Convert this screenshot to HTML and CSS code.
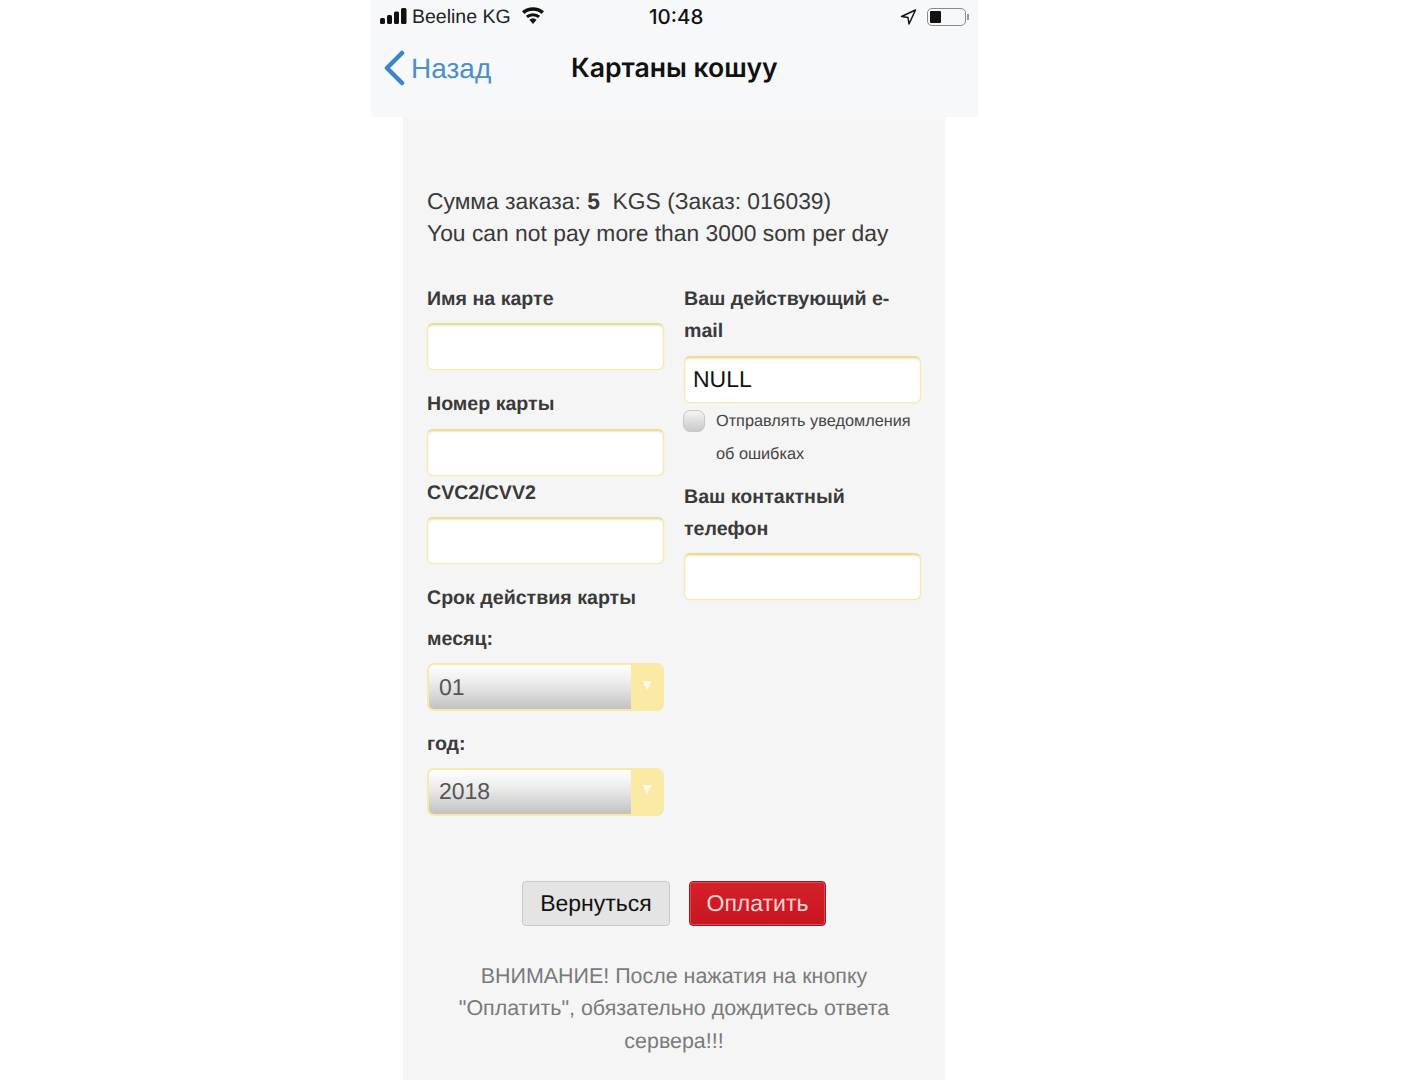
FILE: index.html
```html
<!DOCTYPE html>
<html lang="ru">
<head>
<meta charset="utf-8">
<title>Картаны кошуу</title>
<link rel="stylesheet" href="styles.css">
</head>
<body>
<div class="phone">
  <header class="top">
    <div class="status">
      <div class="status-left">
        <svg class="signal" width="28" height="16" viewBox="0 0 28 16"><rect x="0" y="10" width="5" height="6" rx="1.5"/><rect x="7" y="7" width="5" height="9" rx="1.5"/><rect x="14" y="3.5" width="5" height="12.5" rx="1.5"/><rect x="21" y="0" width="5.5" height="16" rx="1.5"/></svg>
        <span class="carrier">Beeline KG</span>
        <svg class="wifi" width="24" height="17" viewBox="0 0 24 17"><path d="M12 17l-3.6-4.2a5.4 5.4 0 0 1 7.2 0z"/><path d="M6.9 11.1L4.9 8.8a10.8 10.8 0 0 1 14.2 0l-2 2.3a7.8 7.8 0 0 0-10.2 0z"/><path d="M3.4 7L1 4.3a16.6 16.6 0 0 1 22 0L20.600 7a13 13 0 0 0-17.200 0z"/></svg>
      </div>
      <span class="time">10:48</span>
      <div class="status-right">
        <svg class="loc" width="17" height="16" viewBox="0 0 17 16"><path d="M15.500 1L1.500 7.500l6.500 1 1 6.500z" fill="none" stroke="#111" stroke-width="1.500" stroke-linejoin="round"/></svg>
        <div class="battery"><div class="battery-level"></div></div>
        <div class="battery-tip"></div>
      </div>
    </div>
    <nav class="navbar">
      <a class="back">
        <svg width="22" height="36" viewBox="0 0 22 36"><path d="M19 3L4 18l15 15" fill="none" stroke="#3a84c9" stroke-width="4.500" stroke-linecap="round" stroke-linejoin="round"/></svg>
        <span>Назад</span>
      </a>
      <h1 class="title">Картаны кошуу</h1>
    </nav>
  </header>
  <main class="panel">
    <p class="intro">Сумма заказа: <b>5</b>&nbsp; KGS (Заказ: 016039)<br>You can not pay more than 3000 som per day</p>
    <div class="columns">
      <div class="col">
        <label class="lbl">Имя на карте</label>
        <div class="input gap-b"></div>
        <label class="lbl">Номер карты</label>
        <div class="input"></div>
        <label class="lbl">CVC2/CVV2</label>
        <div class="input gap-b"></div>
        <label class="lbl">Срок действия карты</label>
        <label class="lbl">месяц:</label>
        <div class="select select-gap"><span>01</span><i class="arrow"></i></div>
        <label class="lbl lbl-tight">год:</label>
        <div class="select"><span>2018</span><i class="arrow"></i></div>
      </div>
      <div class="col">
        <label class="lbl">Ваш действующий e-mail</label>
        <div class="input value">NULL</div>
        <div class="check-row">
          <span class="check"></span>
          <span class="check-text">Отправлять уведомления об ошибках</span>
        </div>
        <label class="lbl">Ваш контактный телефон</label>
        <div class="input"></div>
      </div>
    </div>
    <div class="actions">
      <button class="btn btn-back">Вернуться</button>
      <button class="btn btn-pay">Оплатить</button>
    </div>
    <p class="warn">ВНИМАНИЕ! После нажатия на кнопку "Оплатить", обязательно дождитесь ответа сервера!!!</p>
  </main>
</div>
</body>
</html>
```
FILE: styles.css
```css
* { box-sizing: border-box; }
html, body { margin: 0; height: 1080px; overflow: hidden; background: #fff; }
body { font-family: "Liberation Sans", Arial, sans-serif; color: #3a3a3a; text-rendering: geometricPrecision; }

.phone { width: 607px; height: 1080px; margin-left: 371px; display: flex; flex-direction: column; }

.top { height: 117px; background: #f7f8fa; flex: none; }
.status { height: 34px; position: relative; display: flex; align-items: center; justify-content: space-between; padding: 0 9px; color: #111; }
.status-left { display: flex; align-items: center; gap: 4px; }
.signal { fill: #111; margin-top: -2px; }
.carrier { font-size: 19.500px; color: #222; }
.wifi { fill: #111; margin-left: 6px; margin-top: -4px; }
.time { position: absolute; left: 278px; top: 5px; font-family: Inter, "Liberation Sans", sans-serif; font-size: 20.500px; font-weight: 500; line-height: 24px; }
.status-right { display: flex; align-items: center; }
.loc { margin-right: 10px; }
.battery { width: 39px; height: 18px; border: 1.5px solid #8a8a8a; border-radius: 5px; padding: 2px; }
.battery-level { width: 11px; height: 100%; background: #111; border-radius: 1px; }
.battery-tip { width: 2px; height: 6px; background: #999; margin-left: 1px; }

.navbar { height: 68px; position: relative; padding-left: 12px; display: flex; align-items: center; }
.back { display: flex; align-items: center; gap: 6px; color: #4a90c8; font-size: 28px; line-height: 36px; }
.back span { padding-top: 1px; }
.title { position: absolute; left: 200px; top: 17px; margin: 0; font-family: Inter, "Liberation Sans", sans-serif; font-size: 26.600px; font-weight: 600; line-height: 34px; color: #111; }

.panel { flex: 1; margin: 0 33px 0 32px; padding: 68px 24px 0; background: #f5f5f6; overflow: hidden; }
.intro { margin: 0 0 33px; font-size: 22.850px; line-height: 32px; }
.columns { display: grid; grid-template-columns: 237px 237px; column-gap: 20px; height: 599px; align-items: start; }
.col { display: flex; flex-direction: column; }
.lbl { display: block; padding-top: 1px; font-size: 19.600px; font-weight: bold; line-height: 32.300px; margin-bottom: 8px; color: #3a3a3a; }
.lbl-tight { margin-bottom: 7px; }
.gap-b { margin-bottom: 17px; }
.select-gap { margin-bottom: 16px; }

.input { height: 47px; background: #fff; border: 1px solid #f5eba8; border-top: 2px solid #e8dc9e; border-radius: 6px; padding-left: 8px; display: flex; align-items: center; font-size: 23px; color: #111; box-shadow: 0 0 2px #f6eeb4, inset 0 1px 2px rgba(200, 190, 130, .35); }
.select { height: 48px; border: 2px solid #f7eaa8; border-radius: 7px; background: linear-gradient(#fff, #ececec 40%, #c2c2c2); display: flex; align-items: center; justify-content: space-between; font-size: 23px; color: #555; padding-left: 10px; overflow: hidden; }
.arrow { width: 32px; height: 100%; background: #fbeaa4; display: flex; align-items: center; justify-content: center; margin-right: -1px; }
.arrow::after { content: ""; border-left: 5px solid transparent; border-right: 5px solid transparent; border-top: 9px solid #fff8e2; margin-top: -4px; }

.check-row { display: flex; align-items: flex-start; gap: 10px; margin-top: 1px; margin-bottom: 8px; }
.check { width: 22px; height: 22px; flex: none; margin-top: 6px; margin-left: -1px; border: 1px solid #c8c8c8; border-radius: 7px; background: linear-gradient(#f4f4f4, #c9c9c9); }
.check-text { font-size: 16.300px; line-height: 33.500px; color: #444; margin-left: 1px; padding-top: 1px; }

.actions { display: flex; justify-content: center; gap: 19px; }
.btn { height: 45px; font-family: inherit; font-size: 23px; border-radius: 4px; padding: 0; text-rendering: inherit; }
.btn-back { width: 148px; background: #e4e4e4; border: 1px solid #c9c9c9; color: #111; }
.btn-pay { width: 137px; background: linear-gradient(#d5202a, #c8161f); border: 1px solid #a81420; box-shadow: inset 0 0 0 1px #dc4a50; color: #f6d5d5; }

.warn { margin: 34px 0 0; text-align: center; font-size: 21.450px; line-height: 32.300px; color: #7a7a7a; }
```
